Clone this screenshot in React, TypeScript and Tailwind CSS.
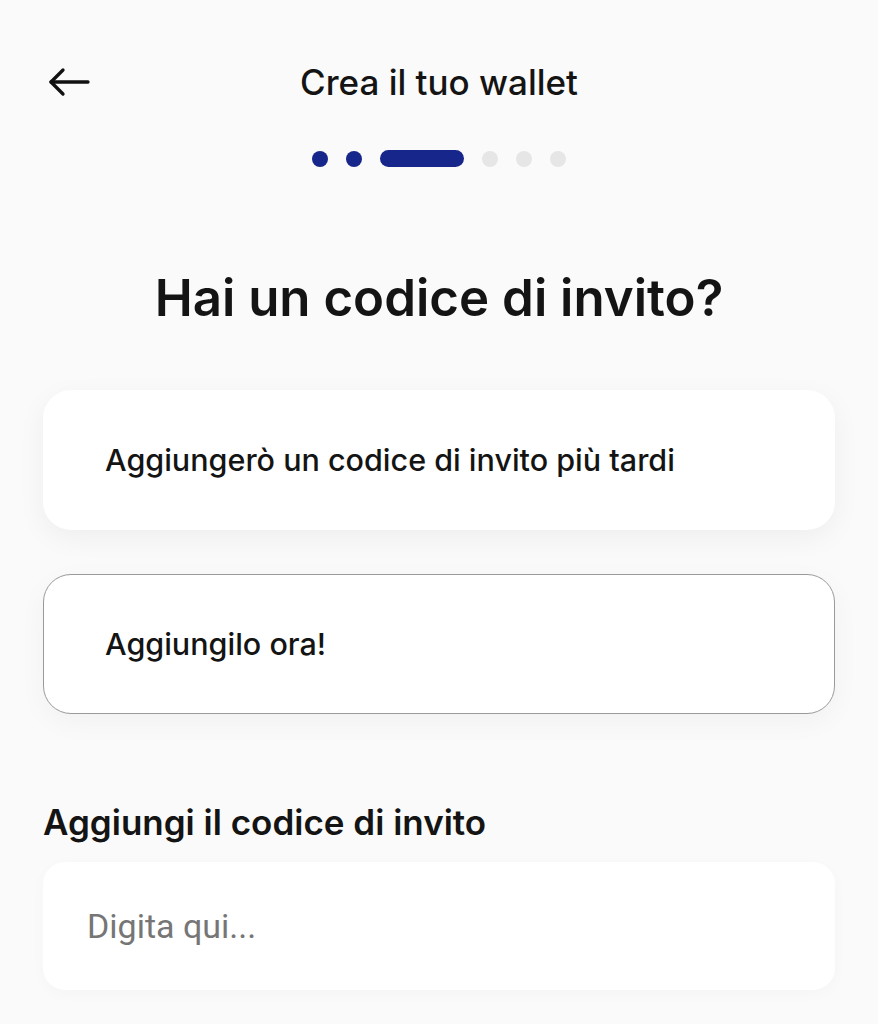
import React from 'react';

const steps = ['done', 'done', 'active', 'todo', 'todo', 'todo'];

export default function App() {
  return (
    <div className="min-h-[1024px] w-full bg-[#fafafa] font-['Inter',sans-serif] text-[#141414]">
      <header className="relative flex flex-col items-center">
        <button className="absolute left-[48px] top-[66px] text-[#111]" aria-label="Indietro">
          <svg width="42" height="32" viewBox="0 0 42 32" fill="none" stroke="currentColor" strokeWidth="3.3" strokeLinecap="round" strokeLinejoin="round">
            <path d="M40 16H3" />
            <path d="M15 4L3 16l12 12" />
          </svg>
        </button>
        <h1 className="mt-[62px] text-[35px] font-medium leading-[40px]">Crea il tuo wallet</h1>
        <div className="mt-[48px] flex items-center gap-[18px]">
          {steps.map((s, i) => (
            <span
              key={i}
              className={
                s === 'active'
                  ? 'h-[17px] w-[84px] rounded-full bg-[#16268a]'
                  : s === 'done'
                  ? 'h-[16px] w-[16px] rounded-full bg-[#16268a]'
                  : 'h-[16px] w-[16px] rounded-full bg-[#e6e6e6]'
              }
            />
          ))}
        </div>
      </header>

      <main className="px-[43px]">
        <h2 className="mt-[103px] text-center text-[51px] font-semibold leading-[56px]">Hai un codice di invito?</h2>

        <div className="mt-[64px] flex flex-col gap-[44px]">
          <button className="flex h-[140px] w-full items-center rounded-[28px] bg-white px-[62px] text-left shadow-[0_8px_28px_rgba(0,0,0,0.05)]">
            <span className="text-[30.5px] font-medium leading-[36px]">Aggiungerò un codice di invito più tardi</span>
          </button>
          <button className="flex h-[140px] w-full items-center rounded-[28px] border-[1.5px] border-[#9a9a9a] bg-white px-[61px] text-left shadow-[0_8px_28px_rgba(0,0,0,0.04)]">
            <span className="text-[30.5px] font-medium leading-[36px]">Aggiungilo ora!</span>
          </button>
        </div>

        <label className="mt-[88px] block text-[35px] font-semibold leading-[40px]">Aggiungi il codice di invito</label>
        <div className="mt-[20px] flex h-[128px] items-center rounded-[22px] bg-white px-[44px] shadow-[0_4px_16px_rgba(0,0,0,0.025)]">
          <input
            className="w-full bg-transparent font-['Roboto',sans-serif] text-[34px] text-[#141414] outline-none placeholder:text-[#767676]"
            placeholder="Digita qui..."
          />
        </div>
      </main>
    </div>
  );
}
